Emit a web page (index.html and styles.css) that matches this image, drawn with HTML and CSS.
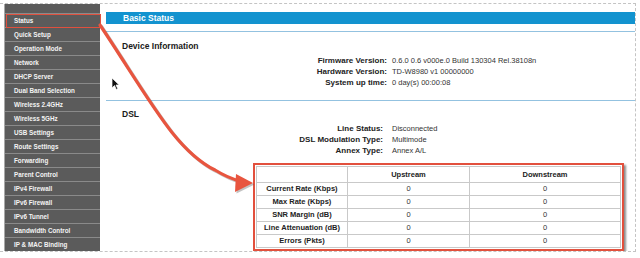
FILE: index.html
```html
<!DOCTYPE html>
<html>
<head>
<meta charset="utf-8">
<link rel="stylesheet" href="styles.css">
</head>
<body>
<div class="sheet">
  <nav class="sidebar">
    <div class="nav-top"></div>
    <div class="nav-item active">Status</div>
    <div class="nav-item">Quick Setup</div>
    <div class="nav-item">Operation Mode</div>
    <div class="nav-item">Network</div>
    <div class="nav-item">DHCP Server</div>
    <div class="nav-item">Dual Band Selection</div>
    <div class="nav-item">Wireless 2.4GHz</div>
    <div class="nav-item">Wireless 5GHz</div>
    <div class="nav-item">USB Settings</div>
    <div class="nav-item">Route Settings</div>
    <div class="nav-item">Forwarding</div>
    <div class="nav-item">Parent Control</div>
    <div class="nav-item">IPv4 Firewall</div>
    <div class="nav-item">IPv6 Firewall</div>
    <div class="nav-item">IPv6 Tunnel</div>
    <div class="nav-item">Bandwidth Control</div>
    <div class="nav-item">IP &amp; MAC Binding</div>
    <div class="nav-item"></div>
  </nav>
  <main class="main">
    <div class="titlebar">Basic Status</div>
    <div class="rule rule-1"></div>
    <div class="section-title st-1">Device Information</div>
    <div class="info">
      <div class="lbl">Firmware Version:</div><div class="val">0.6.0 0.6 v000e.0 Build 130304 Rel.38108n</div>
      <div class="lbl">Hardware Version:</div><div class="val">TD-W8980 v1 00000000</div>
      <div class="lbl">System up time:</div><div class="val">0 day(s) 00:00:08</div>
    </div>
    <div class="rule rule-2"></div>
    <div class="section-title st-2">DSL</div>
    <div class="info info-dsl">
      <div class="lbl">Line Status:</div><div class="val">Disconnected</div>
      <div class="lbl">DSL Modulation Type:</div><div class="val">Multimode</div>
      <div class="lbl">Annex Type:</div><div class="val">Annex A/L</div>
    </div>
    <div class="tablebox">
      <table class="stats">
        <tr class="head"><th class="c1"></th><th class="c2">Upstream</th><th class="c3">Downstream</th></tr>
        <tr><th>Current Rate (Kbps)</th><td>0</td><td>0</td></tr>
        <tr><th>Max Rate (Kbps)</th><td>0</td><td>0</td></tr>
        <tr><th>SNR Margin (dB)</th><td>0</td><td>0</td></tr>
        <tr><th>Line Attenuation (dB)</th><td>0</td><td>0</td></tr>
        <tr><th>Errors (Pkts)</th><td>0</td><td>0</td></tr>
      </table>
    </div>
  </main>
</div>
<svg class="overlay" width="640" height="258" viewBox="0 0 640 258">
  <g transform="translate(1.5,1.5)" opacity="0.35">
    <path d="M100,25 C150,100 175,150 215,170 Q228,178 240,181" fill="none" stroke="#555" stroke-width="3.2" stroke-linecap="round"/>
    <polygon points="253,183 236,174 235,192" fill="#555"/>
  </g>
  <path d="M100,25 C150,100 175,150 215,170 Q228,178 240,181" fill="none" stroke="#e8553f" stroke-width="3.2" stroke-linecap="round"/>
  <polygon points="253,183 236,174 235,192" fill="#e8553f"/>
  <path d="M112,78 L112,88 L114.5,85.5 L116.3,89.5 L117.8,88.8 L116,85 L119.2,85 Z" fill="#111" stroke="#fff" stroke-width="0.7"/>
</svg>
</body>
</html>
```

FILE: styles.css
```css
html, body {
  margin: 0;
  padding: 0;
  background: #ffffff;
}
body {
  position: relative;
  width: 640px;
  height: 258px;
  overflow: hidden;
  font-family: "Liberation Sans", Arial, sans-serif;
  color: #222;
}
.sheet {
  display: flex;
  margin-top: 3px;
  width: 636px;
  height: 249px;
  overflow: hidden;
  border-top: 1px dashed #c4c4c4;
  border-right: 1px dashed #c4c4c4;
  border-bottom: 1px dashed #c4c4c4;
  box-sizing: border-box;
}
.sidebar {
  margin-left: 4px;
  width: 96px;
  flex: none;
  background: #5b5b5b;
  border-left: 1px solid #a8a8a8;
  box-sizing: border-box;
}
.nav-top {
  height: 9px;
  border-bottom: 1px solid #8a8a8a;
}
.nav-item {
  position: relative;
  height: 13px;
  line-height: 13px;
  border-bottom: 1px solid #8a8a8a;
  padding-left: 9px;
  font-size: 6.3px;
  font-weight: bold;
  color: #f4f4f4;
  white-space: nowrap;
}
.nav-item.active::after {
  content: "";
  position: absolute;
  left: 1px;
  top: -0.5px;
  right: -1px;
  bottom: -0.5px;
  border: 1.5px solid #e0503e;
}
.main {
  flex: 1;
  display: flex;
  flex-direction: column;
  padding-left: 6px;
}
.titlebar {
  margin-top: 8px;
  height: 12px;
  line-height: 12px;
  background: #1393cf;
  color: #ffffff;
  font-size: 8.5px;
  font-weight: bold;
  padding-left: 17px;
}
.rule {
  height: 2px;
  background: #93c2e0;
}
.rule-1 { margin-top: 7px; }
.rule-2 { margin-top: 12px; }
.section-title {
  font-size: 8.5px;
  font-weight: bold;
  line-height: 12px;
  padding-left: 16px;
  color: #1a1a1a;
}
.st-1 { margin-top: 8px; }
.st-2 { margin-top: 7px; }
.info {
  display: grid;
  grid-template-columns: 281px auto;
  column-gap: 5px;
  margin-top: 3px;
  line-height: 11px;
}
.info-dsl {
  grid-template-columns: 277px auto;
  column-gap: 9px;
}
.lbl {
  text-align: right;
  font-size: 8px;
  font-weight: bold;
  color: #222;
  white-space: nowrap;
}
.val {
  font-size: 7.5px;
  color: #333;
  white-space: nowrap;
}
.tablebox {
  margin-top: 7px;
  margin-left: 147px;
  width: 365px;
  border: 2px solid #e2503d;
  padding: 1px;
  box-shadow: 2px 2px 2px rgba(0, 0, 0, 0.45);
  background: #fff;
}
.stats {
  border-collapse: collapse;
  width: 365px;
  font-size: 7.5px;
  color: #222;
}
.stats th, .stats td {
  border: 1px solid #c9c9c9;
  height: 12px;
  padding: 0;
  text-align: center;
  line-height: 12px;
}
.stats th { font-weight: bold; }
.stats td { color: #333; }
.stats .head th { height: 15px; }
.stats .c1 { width: 90px; }
.stats .c2 { width: 121px; }
.overlay {
  position: absolute;
  left: 0;
  top: 0;
  pointer-events: none;
}
```
